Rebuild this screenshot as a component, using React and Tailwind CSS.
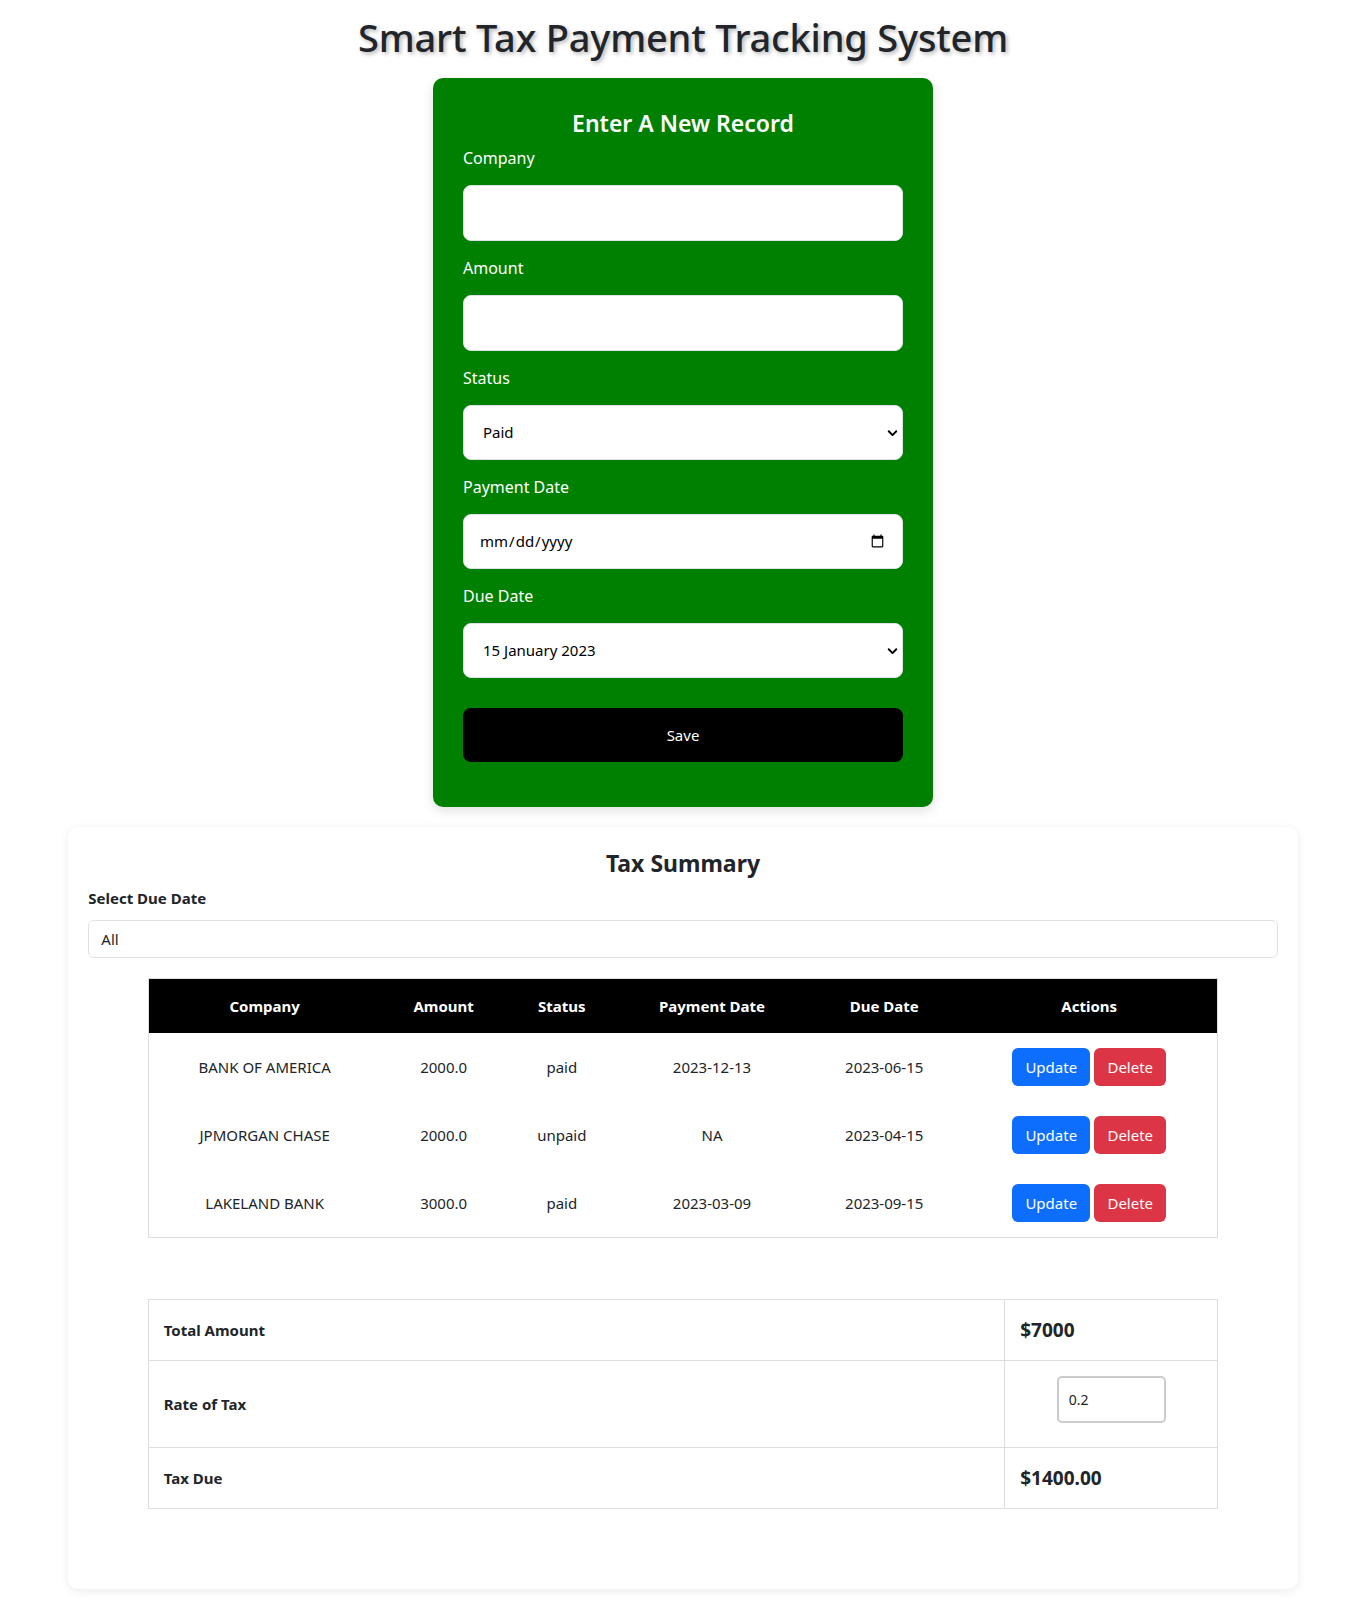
import React, { useState } from 'react';

const records = [
  { company: 'BANK OF AMERICA', amount: '2000.0', status: 'paid', paid: '2023-12-13', due: '2023-06-15' },
  { company: 'JPMORGAN CHASE', amount: '2000.0', status: 'unpaid', paid: 'NA', due: '2023-04-15' },
  { company: 'LAKELAND BANK', amount: '3000.0', status: 'paid', paid: '2023-03-09', due: '2023-09-15' },
];

const Chevron = () => (
  <svg className="pointer-events-none absolute right-[5px] top-1/2 h-[11px] w-[11px] -translate-y-1/2" viewBox="0 0 16 16" fill="none">
    <path d="M2.5 5.5 8 11l5.5-5.5" stroke="#000" strokeWidth="2.8" strokeLinecap="round" strokeLinejoin="round" />
  </svg>
);

const Field = ({ label, children }) => (
  <div>
    <label className="block text-base leading-6 text-white">{label}</label>
    <div className="relative my-[15px]">{children}</div>
  </div>
);

const App = () => {
  const [rate, setRate] = useState('0.2');
  const total = 7000;
  const due = (total * parseFloat(rate || 0)).toFixed(2);

  return (
    <div className="min-h-[1608px] bg-white pb-5 font-['Noto_Sans',sans-serif] text-[#212529]">
      {/* Header */}
      <h1 className="pt-[13px] text-center text-[38px] font-medium leading-[48px] tracking-[-0.2px] [text-shadow:2px_2px_4px_rgba(0,0,0,0.3)]">
        Smart Tax Payment Tracking System
      </h1>

      {/* Record form */}
      <div className="mx-auto mt-[17px] w-[500px] rounded-[10px] bg-[#008000] px-[30px] pt-[31px] pb-[45px] shadow-[0_4px_12px_rgba(0,0,0,0.12)]">
        <h2 className="mb-2 text-center text-[23px] font-semibold leading-[29px] text-white">Enter A New Record</h2>
        <Field label="Company">
          <input type="text" className="block h-[56px] w-full rounded-[8px] border border-[#dee2e6] bg-white px-4 text-base outline-none" />
        </Field>
        <Field label="Amount">
          <input type="text" className="block h-[56px] w-full rounded-[8px] border border-[#dee2e6] bg-white px-4 text-base outline-none" />
        </Field>
        <Field label="Status">
          <select className="block h-[55px] w-full appearance-none rounded-[8px] border border-[#dee2e6] bg-white pl-[19px] text-[15px] text-black outline-none">
            <option>Paid</option>
            <option>Unpaid</option>
          </select>
          <Chevron />
        </Field>
        <Field label="Payment Date">
          <input type="date" className="block h-[55px] w-full rounded-[8px] border border-[#dee2e6] bg-white pl-[15px] pr-[15px] text-[15px] text-black outline-none" />
        </Field>
        <Field label="Due Date">
          <select className="block h-[55px] w-full appearance-none rounded-[8px] border border-[#dee2e6] bg-white pl-[19px] text-[15px] text-black outline-none">
            <option>15 January 2023</option>
            <option>15 April 2023</option>
            <option>15 June 2023</option>
            <option>15 September 2023</option>
          </select>
          <Chevron />
        </Field>
        <button className="mt-[30px] block h-[54px] w-full rounded-[8px] bg-black text-[15px] text-white">Save</button>
      </div>

      {/* Summary */}
      <div className="mx-auto mt-5 w-[90%] rounded-[10px] bg-white p-5 shadow-[0_2px_10px_rgba(0,0,0,0.08)]">
        <h2 className="mb-[8px] pt-[2px] text-center text-[23px] font-bold leading-[29px]">Tax Summary</h2>
        <label className="block text-[15px] font-bold leading-6">Select Due Date</label>
        <select className="mt-[10px] block h-[38px] w-full appearance-none rounded-[6px] border border-[#dee2e6] bg-white px-3 text-[15px] outline-none">
          <option>All</option>
        </select>

        <table className="mx-auto mt-5 w-[90%] table-fixed border-collapse border border-[#dddddd] text-center text-[15px]">
          <colgroup>
            <col className="w-[232px]" />
            <col className="w-[126px]" />
            <col className="w-[110px]" />
            <col className="w-[190px]" />
            <col className="w-[154px]" />
            <col className="w-[256px]" />
          </colgroup>
          <thead>
            <tr className="bg-black text-white">
              {['Company', 'Amount', 'Status', 'Payment Date', 'Due Date', 'Actions'].map((h) => (
                <th key={h} className="py-[15px] font-bold leading-6">{h}</th>
              ))}
            </tr>
          </thead>
          <tbody>
            {records.map((r) => (
              <tr key={r.company}>
                <td className="py-[15px]">{r.company}</td>
                <td className="py-[15px]">{r.amount}</td>
                <td className="py-[15px]">{r.status}</td>
                <td className="py-[15px]">{r.paid}</td>
                <td className="py-[15px]">{r.due}</td>
                <td className="py-[15px]">
                  <div className="flex justify-center gap-1">
                    <button className="h-[38px] w-[78px] rounded-[6px] bg-[#0d6efd] text-[15px] text-white">Update</button>
                    <button className="h-[38px] w-[72px] rounded-[6px] bg-[#dc3545] text-[15px] text-white">Delete</button>
                  </div>
                </td>
              </tr>
            ))}
          </tbody>
        </table>

        <table className="mx-auto mt-[61px] mb-[60px] w-[90%] border-collapse border border-[#dddddd] text-left">
          <tbody>
            <tr>
              <td className="border border-[#dddddd] px-[15px] py-[15px] text-[15px] font-bold">Total Amount</td>
              <td className="w-[213px] border border-[#dddddd] px-[15px] py-[15px] text-[19px] font-bold leading-[30px]">${total}</td>
            </tr>
            <tr>
              <td className="border border-[#dddddd] px-[15px] text-[15px] font-bold">Rate of Tax</td>
              <td className="border border-[#dddddd] px-[15px] pt-[15px] pb-[24px]">
                <input
                  value={rate}
                  onChange={(e) => setRate(e.target.value)}
                  className="mx-auto block h-[47px] w-[109px] rounded-[5px] border-2 border-[#cccccc] px-[10px] text-[14px] outline-none"
                />
              </td>
            </tr>
            <tr>
              <td className="border border-[#dddddd] px-[15px] py-[15px] text-[15px] font-bold">Tax Due</td>
              <td className="border border-[#dddddd] px-[15px] py-[15px] text-[19px] font-bold leading-[30px]">${due}</td>
            </tr>
          </tbody>
        </table>
      </div>
    </div>
  );
};

export default App;
